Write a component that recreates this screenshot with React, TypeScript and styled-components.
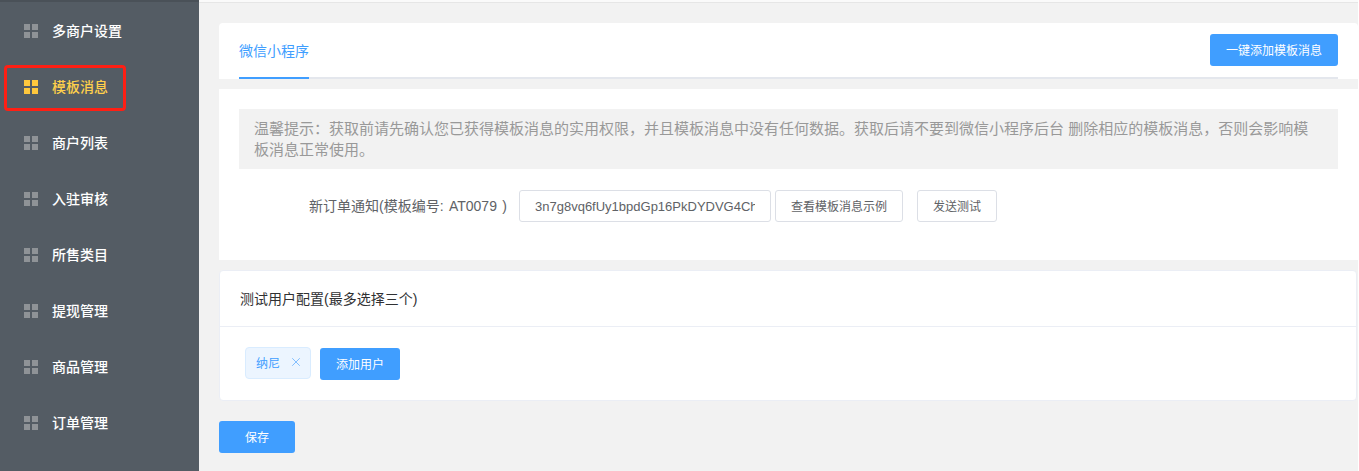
import React from "react";
import styled, { createGlobalStyle } from "styled-components";
import { X } from "lucide-react";

const menuItems = [
  "多商户设置",
  "模板消息",
  "商户列表",
  "入驻审核",
  "所售类目",
  "提现管理",
  "商品管理",
  "订单管理",
];

const ACTIVE_ITEM = "模板消息";

const GlobalStyle = createGlobalStyle`
  html, body {
    margin: 0;
    padding: 0;
    height: 100%;
    overflow: hidden;
    background: #f2f2f2;
    font-family: "Liberation Sans", "Noto Sans CJK SC", sans-serif;
  }
  * {
    box-sizing: border-box;
  }
`;

const MenuIcon = ({ active }: { active: boolean }) => (
  <IconGrid $active={active}>
    <i />
    <i />
    <i />
    <i />
  </IconGrid>
);

export default function App() {
  return (
    <>
      <GlobalStyle />
      <Page>
        <Sidebar>
          {menuItems.map((item) => (
            <MenuItem key={item} $active={item === ACTIVE_ITEM}>
              <MenuIcon active={item === ACTIVE_ITEM} />
              <MenuLabel>{item}</MenuLabel>
              {item === ACTIVE_ITEM && <Highlight />}
            </MenuItem>
          ))}
        </Sidebar>
        <Main>
          <TopEdge />
          <Content>
            <TabsCard>
              <TabsBar>
                <ActiveTab>微信小程序</ActiveTab>
                <PrimaryButton $width={128}>一键添加模板消息</PrimaryButton>
              </TabsBar>
            </TabsCard>
            <TemplateCard>
              <Tip>
                温馨提示：获取前请先确认您已获得模板消息的实用权限，并且模板消息中没有任何数据。获取后请不要到微信小程序后台 删除相应的模板消息，否则会影响模板消息正常使用。
              </Tip>
              <FormRow>
                <FormLabel>新订单通知(模板编号: AT0079 )</FormLabel>
                <CodeInput readOnly value="3n7g8vq6fUy1bpdGp16PkDYDVG4ChPkDYDVG4Ch" />
                <PlainButton $width={128}>查看模板消息示例</PlainButton>
                <PlainButton $width={80} $gap={14}>
                  发送测试
                </PlainButton>
              </FormRow>
            </TemplateCard>
            <UsersCard>
              <UsersHeader>测试用户配置(最多选择三个)</UsersHeader>
              <UsersBody>
                <UserTag>
                  纳尼
                  <TagClose size={14} strokeWidth={1.5} />
                </UserTag>
                <AddUserButton $width={80}>添加用户</AddUserButton>
              </UsersBody>
            </UsersCard>
            <SaveRow>
              <PrimaryButton $width={76}>保存</PrimaryButton>
            </SaveRow>
          </Content>
        </Main>
      </Page>
    </>
  );
}

const Page = styled.div`
  display: flex;
  width: 1359px;
  height: 471px;
  overflow: hidden;
`;

const Sidebar = styled.nav`
  flex: 0 0 199px;
  padding-top: 1px;
  background: #545c64;
  border-top: 2px solid #4a5158;
`;

const MenuItem = styled.div<{ $active: boolean }>`
  position: relative;
  display: flex;
  align-items: center;
  height: 56px;
  padding-left: 24px;
  font-size: 14px;
  font-weight: 500;
  color: ${(p) => (p.$active ? "#ffd04b" : "#ffffff")};
`;

const MenuLabel = styled.span`
  padding-bottom: 2px;
`;

const IconGrid = styled.span<{ $active: boolean }>`
  display: grid;
  grid-template-columns: 6px 6px;
  grid-template-rows: 6px 6px;
  gap: 2px;
  width: 14px;
  margin-right: 14px;

  i {
    display: block;
    background: ${(p) => (p.$active ? "#ffc83d" : "#8f9397")};
  }
`;

const Highlight = styled.span`
  position: absolute;
  left: 4px;
  top: 6px;
  width: 122px;
  height: 46px;
  border: 3px solid #ff1f14;
  border-radius: 4px;
`;

const Main = styled.main`
  flex: 1;
  min-width: 0;
  background: #f2f2f2;
  border-right: 1px solid #ffffff;
`;

const TopEdge = styled.div`
  height: 3px;
  background: #fafafa;
  border-bottom: 1px solid #e6e6e6;
`;

const Content = styled.div`
  padding: 20px 0 0 20px;
`;

const TabsCard = styled.section`
  height: 56px;
  padding: 0 20px;
  background: #ffffff;
  border-radius: 4px 4px 0 0;
`;

const TabsBar = styled.div`
  display: flex;
  justify-content: space-between;
  height: 56px;
  padding-top: 11px;
  border-bottom: 2px solid #e4e7ed;
`;

const ActiveTab = styled.div`
  width: 70px;
  height: 45px;
  padding-top: 7px;
  font-size: 14px;
  line-height: 20px;
  color: #409eff;
  border-bottom: 2px solid #409eff;
`;

const PrimaryButton = styled.button<{ $width: number }>`
  display: block;
  width: ${(p) => p.$width}px;
  height: 32px;
  padding: 0 0 2px;
  border: none;
  border-radius: 3px;
  background: #409eff;
  color: #ffffff;
  font-family: inherit;
  font-size: 12px;
`;

const AddUserButton = styled(PrimaryButton)`
  margin-top: 1px;
`;

const TemplateCard = styled.section`
  height: 171px;
  margin-top: 10px;
  padding: 20px 20px 0;
  background: #ffffff;
`;

const Tip = styled.div`
  height: 60px;
  padding: 9px 15px;
  background: #f2f2f2;
  color: #999999;
  font-size: 15px;
  line-height: 21px;
`;

const FormRow = styled.div`
  display: flex;
  align-items: center;
  margin-top: 21px;
`;

const FormLabel = styled.label`
  width: 268px;
  margin-right: 12px;
  padding-bottom: 2px;
  text-align: right;
  font-size: 14px;
  word-spacing: 1.5px;
  color: #606266;
`;

const CodeInput = styled.input`
  width: 252px;
  height: 32px;
  margin-right: 4px;
  padding: 0 15px;
  border: 1px solid #dcdfe6;
  border-radius: 3px;
  background: #ffffff;
  color: #606266;
  font-family: inherit;
  font-size: 13px;
  outline: none;
`;

const PlainButton = styled.button<{ $width: number; $gap?: number }>`
  width: ${(p) => p.$width}px;
  height: 32px;
  margin-left: ${(p) => p.$gap ?? 0}px;
  padding: 0 0 2px;
  border: 1px solid #dcdfe6;
  border-radius: 3px;
  background: #ffffff;
  color: #606266;
  font-family: inherit;
  font-size: 12px;
`;

const UsersCard = styled.section`
  height: 131px;
  margin-top: 10px;
  margin-right: 1px;
  background: #ffffff;
  border: 1px solid #ebeef5;
  border-radius: 4px;
`;

const UsersHeader = styled.div`
  height: 56px;
  padding: 18px 20px;
  border-bottom: 1px solid #ebeef5;
  color: #303133;
  font-size: 14px;
  line-height: 20px;
`;

const UsersBody = styled.div`
  display: flex;
  align-items: flex-start;
  gap: 9px;
  padding: 20px 25px;
`;

const UserTag = styled.div`
  display: flex;
  align-items: center;
  justify-content: space-between;
  width: 66px;
  height: 32px;
  padding: 0 7px 2px 10px;
  background: #ecf5ff;
  border: 1px solid #d9ecff;
  border-radius: 4px;
  color: #409eff;
  font-size: 12px;
`;

const TagClose = styled(X)`
  opacity: 0.7;
`;

const SaveRow = styled.div`
  margin-top: 20px;
`;
